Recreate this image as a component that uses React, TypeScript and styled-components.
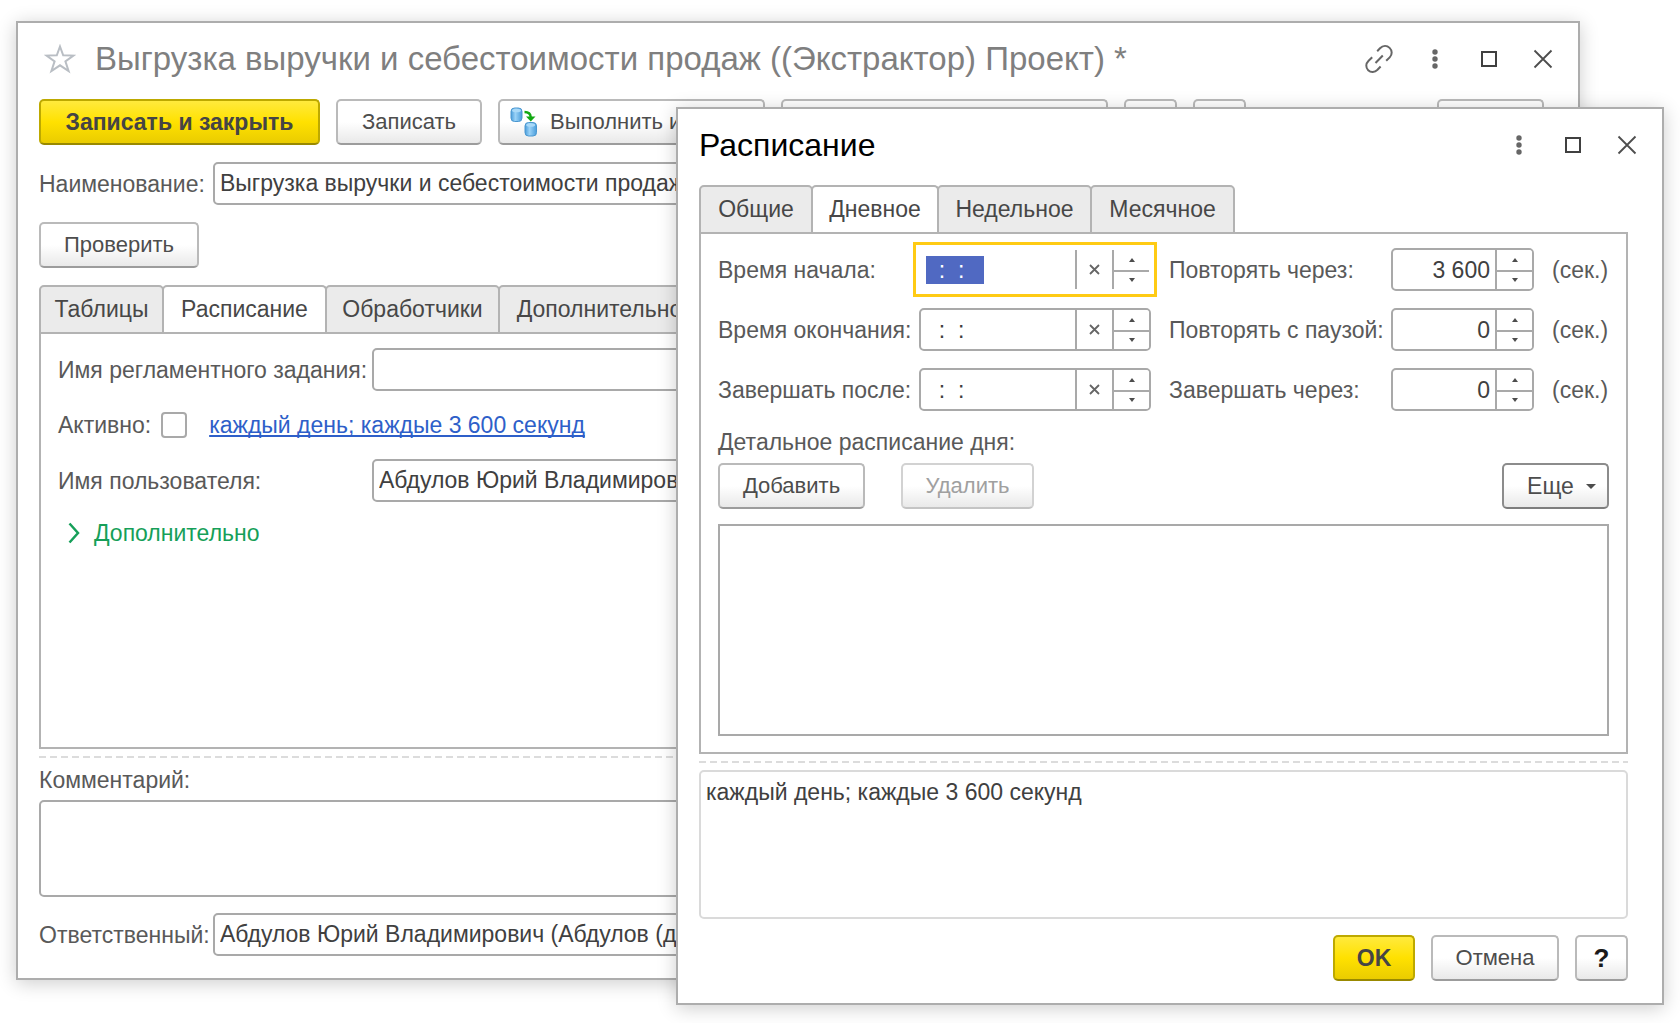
import React, { useEffect, useRef } from "react";
import styled, { createGlobalStyle, css } from "styled-components";

const line = "#b3b3b3";
const fieldLine = "#a9a9a9";

const GlobalStyle = createGlobalStyle`
  *, *::before, *::after { box-sizing: border-box; }
  body {
    margin: 0;
    background: #fff;
    color: #595959;
    font-family: "Liberation Sans", Arial, sans-serif;
    font-size: 23px;
    line-height: 28px;
  }
  button, input, textarea { font: inherit; }
`;

const Desktop = styled.main`
  position: relative;
  min-height: 100vh;
  overflow: hidden;
`;

const Window = styled.section<{ $top: number; $left: number; $right: number }>`
  position: absolute;
  top: ${(p) => p.$top}px;
  left: ${(p) => p.$left}px;
  right: ${(p) => p.$right}px;
  background: #fff;
  border: 2px solid #adadad;
  box-shadow: 0 3px 18px rgba(0, 0, 0, 0.2);
`;

const Header = styled.header`
  display: flex;
  align-items: center;
  height: 72px;
  margin-bottom: 4px;
  padding: 0 8px 0 21px;
`;

const Title = styled.h1<{ $muted?: boolean }>`
  flex: 1;
  min-width: 0;
  margin: 0;
  font-size: ${(p) => (p.$muted ? 33 : 32)}px;
  line-height: 40px;
  font-weight: 400;
  white-space: nowrap;
  color: ${(p) => (p.$muted ? "#7f7f7f" : "#000")};
`;

const IconButton = styled.button<{ $width?: number }>`
  display: flex;
  align-items: center;
  justify-content: center;
  width: ${(p) => p.$width ?? 54}px;
  height: 40px;
  padding: 0;
  border: 0;
  background: none;
`;

const StarButton = styled(IconButton)`
  margin: 0 17px 0 3px;
`;

const Body = styled.div`
  display: flex;
  flex-direction: column;
  padding: 0 34px 22px 21px;
`;

const Toolbar = styled.div<{ $end?: boolean; $space?: number }>`
  display: flex;
  gap: 16px;
  justify-content: ${(p) => (p.$end ? "flex-end" : "flex-start")};
  margin-top: ${(p) => p.$space ?? 0}px;
`;

const Spacer = styled.span`
  flex: 1;
`;

const Button = styled.button<{ $primary?: boolean; $strong?: boolean; $width: number }>`
  display: flex;
  align-items: center;
  justify-content: center;
  gap: 12px;
  width: ${(p) => p.$width}px;
  height: 46px;
  padding: 0;
  overflow: hidden;
  white-space: nowrap;
  font-size: 22px;
  color: #4d4d4d;
  border: 2px solid ${(p) => (p.$strong ? "#8c8c8c" : "#bababa")};
  border-bottom-color: ${(p) => (p.$strong ? "#7d7d7d" : "#9c9c9c")};
  border-radius: 5px;
  background: linear-gradient(#fff 0%, #fff 50%, #e9e9e9 100%);

  &:disabled {
    color: #a0a0a0;
    border-color: #d2d2d2;
    border-bottom-color: #c4c4c4;
  }

  ${(p) =>
    p.$primary &&
    css`
      font-size: 23px;
      font-weight: 700;
      color: #454545;
      border-color: #bda900;
      border-bottom-color: #998900;
      background: linear-gradient(#ffea3d 0%, #ffe100 50%, #eacc00 100%);
    `}
`;

const IconTextButton = styled(Button)`
  justify-content: flex-start;
  padding-left: 10px;
`;

const HelpButton = styled(Button)`
  font-weight: 700;
  font-size: 26px;
  color: #1a1a1a;
`;

const DeleteButton = styled(Button)`
  margin-left: 20px;
`;

const MoreButton = styled(Button)`
  padding-left: 12px;
  font-size: 23px;
`;

const FormRow = styled.div<{ $label: number; $space?: number }>`
  display: grid;
  grid-template-columns: ${(p) => p.$label}px minmax(0, 1fr);
  align-items: center;
  margin-top: ${(p) => p.$space ?? 0}px;
`;

const Label = styled.label`
  white-space: nowrap;
`;

const fieldBox = css`
  border: 2px solid ${fieldLine};
  border-radius: 5px;
  background: #fff;
  color: #404040;
`;

const TextInput = styled.input`
  ${fieldBox}
  width: 100%;
  height: 43px;
  padding: 0 5px;
  outline: 0;
`;

const TextArea = styled.textarea<{ $height: number; $soft?: boolean }>`
  ${fieldBox}
  display: block;
  width: 100%;
  height: ${(p) => p.$height}px;
  padding: 6px 5px;
  resize: none;
  outline: 0;
  ${(p) => p.$soft && "border-color: #dadada;"}
`;

const TabSheet = styled.div<{ $space?: number }>`
  display: grid;
  margin-top: ${(p) => p.$space ?? 0}px;
`;

const Tabs = styled.div`
  display: flex;
  height: 49px;
  margin-bottom: -2px;
`;

const Tab = styled.button<{ $active?: boolean; $width: number }>`
  width: ${(p) => p.$width}px;
  padding: 0 0 2px;
  border: 2px solid ${line};
  border-bottom-color: ${(p) => (p.$active ? "#fff" : line)};
  border-radius: 5px 5px 0 0;
  background: ${(p) => (p.$active ? "#fff" : "#ebebeb")};
  color: #474747;
  white-space: nowrap;

  & + & {
    margin-left: -2px;
  }
`;

const Panel = styled.div<{ $minHeight?: number }>`
  display: flex;
  flex-direction: column;
  gap: 17px;
  min-height: ${(p) => p.$minHeight ?? 0}px;
  padding: 14px 17px 16px;
  border: 2px solid ${line};
`;

const Splitter = styled.div`
  height: 2px;
  margin: 7px 0;
  background: repeating-linear-gradient(90deg, #dcdcdc 0 7px, transparent 7px 11px);
`;

const ActiveRow = styled.div`
  display: flex;
  align-items: center;
  height: 34px;
`;

const CheckBox = styled.input`
  appearance: none;
  width: 26px;
  height: 26px;
  margin: 0 22px 0 10px;
  border: 2px solid ${fieldLine};
  border-radius: 4px;
  background: #fff;
`;

const ScheduleLink = styled.a`
  color: #2e5fc9;
  text-decoration: underline;
  text-decoration-thickness: 2px;
  text-underline-offset: 2px;
  text-decoration-skip-ink: none;
  white-space: nowrap;
`;

const Expander = styled.button`
  display: flex;
  align-items: center;
  align-self: flex-start;
  gap: 14px;
  height: 28px;
  padding: 0 0 0 10px;
  border: 0;
  background: none;
  color: #169f59;
`;

const CommentLabel = styled(Label)`
  line-height: 30px;
  margin-bottom: 5px;
`;

const ScheduleGrid = styled.div`
  display: grid;
  grid-template-columns: 201px minmax(0, 1fr) 240px 143px 75px;
  row-gap: 17px;
  align-items: center;
`;

const OffsetLabel = styled(Label)`
  padding-left: 18px;
`;

const Composite = styled.div<{ $focused?: boolean }>`
  ${fieldBox}
  display: flex;
  height: 43px;
  overflow: hidden;
  ${(p) =>
    p.$focused &&
    css`
      border-color: #fff;
      border-radius: 0;
      outline: 3px solid #ffcb14;
      outline-offset: 3px;
    `}
`;

const BareInput = styled.input<{ $number?: boolean }>`
  flex: 1;
  min-width: 0;
  padding: 0 5px;
  border: 0;
  outline: 0;
  background: none;
  color: #404040;
  caret-color: transparent;
  text-align: ${(p) => (p.$number ? "right" : "left")};

  &::selection {
    background: #5069c2;
    color: #fff;
  }
`;

const FieldButton = styled.button`
  display: flex;
  align-items: center;
  justify-content: center;
  width: 37px;
  padding: 0;
  border: 0;
  border-left: 2px solid ${fieldLine};
  background: #fff;
`;

const Spinner = styled.div`
  display: grid;
  grid-template-rows: 1fr 1fr;
  width: 37px;
  border-left: 2px solid ${fieldLine};
`;

const SpinButton = styled.button`
  display: flex;
  align-items: center;
  justify-content: center;
  padding: 0;
  border: 0;
  background: #fff;

  & + & {
    border-top: 2px solid ${fieldLine};
  }
`;

const Detail = styled.div`
  display: grid;
`;

const DetailLabel = styled.div`
  line-height: 28px;
`;

const DetailList = styled.div`
  height: 212px;
  margin-top: 15px;
  border: 2px solid ${fieldLine};
`;

const StarIcon = () => (
  <svg width="32" height="30" viewBox="0 0 32 30" fill="none" stroke="#b9bec4" strokeWidth="2">
    <path d="M16 2.500 19.200 11.300 29.500 11.600 21.400 17.400 24.600 27 16 21.300 7.400 27 10.600 17.400 2.500 11.600 12.800 11.300Z" />
  </svg>
);

const LinkIcon = () => (
  <svg width="30" height="30" viewBox="0 0 30 30" fill="none" stroke="#666" strokeWidth="2">
    <path d="M13.200 7.200 16 4.300C19 1.300 23 1.300 25.600 3.900S28.500 10.600 25.700 13.400L22.200 16.800" />
    <path d="M8.200 13.200 4.600 16.800C1.600 19.800 1.600 23.600 4.200 26.200S10.700 28.600 13.500 25.800L16.600 22.500" />
    <path d="M11.500 19 18.800 11.500" />
  </svg>
);

const DotsIcon = () => (
  <svg width="8" height="22" viewBox="0 0 8 22" fill="#666">
    <circle cx="4" cy="4" r="2.700" />
    <circle cx="4" cy="11" r="2.700" />
    <circle cx="4" cy="18" r="2.700" />
  </svg>
);

const SquareIcon = () => (
  <svg width="18" height="18" viewBox="0 0 18 18" fill="none" stroke="#404040" strokeWidth="2">
    <rect x="2" y="2" width="14" height="14" />
  </svg>
);

const CloseIcon = () => (
  <svg width="20" height="20" viewBox="0 0 20 20" fill="none" stroke="#4d4d4d" strokeWidth="1.8">
    <path d="M1.500 1.500 18.500 18.500M18.500 1.500 1.500 18.500" />
  </svg>
);

const TransferIcon = () => (
  <svg width="28" height="30" viewBox="0 0 28 30">
    <defs>
      <linearGradient id="cylinder" x1="0" x2="1" y1="0" y2="0">
        <stop offset="0" stopColor="#4a9ddb" />
        <stop offset="0.4" stopColor="#9ad2f7" />
        <stop offset="1" stopColor="#4a9ddb" />
      </linearGradient>
    </defs>
    <rect x="1" y="1" width="11" height="13.500" rx="3.500" fill="url(#cylinder)" stroke="#4a97d0" />
    <ellipse cx="6.500" cy="3.500" rx="4.500" ry="1.800" fill="#a9d9f8" />
    <rect x="15" y="15.500" width="11.500" height="13.500" rx="3.500" fill="url(#cylinder)" stroke="#4a97d0" />
    <ellipse cx="20.700" cy="18" rx="4.500" ry="1.800" fill="#a9d9f8" />
    <path d="M14.500 5c4 0 6 1.500 6.200 5" fill="none" stroke="#12a812" strokeWidth="2.400" />
    <path d="M16 9.500h9.500l-4.700 5Z" fill="#12a812" />
  </svg>
);

const ChevronIcon = () => (
  <svg width="12" height="22" viewBox="0 0 12 22" fill="none" stroke="#169f59" strokeWidth="2.500">
    <path d="M1.500 1.500 10 11 1.500 20.500" />
  </svg>
);

const ClearIcon = () => (
  <svg width="11" height="11" viewBox="0 0 11 11" fill="none" stroke="#666" strokeWidth="1.800">
    <path d="M1 1 10 10M10 1 1 10" />
  </svg>
);

const Arrow = ({ down, wide }: { down?: boolean; wide?: boolean }) => (
  <svg width={wide ? 10 : 6} height={wide ? 5 : 4} viewBox="0 0 6 4" preserveAspectRatio="none" fill="#4d4d4d">
    <path d={down ? "M0 0h6L3 4Z" : "M0 4h6L3 0Z"} />
  </svg>
);

const SpinButtons = () => (
  <Spinner>
    <SpinButton type="button" aria-label="Увеличить"><Arrow /></SpinButton>
    <SpinButton type="button" aria-label="Уменьшить"><Arrow down /></SpinButton>
  </Spinner>
);

const TimeField = ({ id, focused }: { id: string; focused?: boolean }) => {
  const input = useRef<HTMLInputElement>(null);
  useEffect(() => {
    if (focused && input.current) {
      input.current.focus();
      input.current.select();
    }
  }, [focused]);
  return (
    <Composite $focused={focused}>
      <BareInput id={id} ref={input} defaultValue="  :  :   " />
      <FieldButton type="button" aria-label="Очистить"><ClearIcon /></FieldButton>
      <SpinButtons />
    </Composite>
  );
};

const NumberField = ({ id, value }: { id: string; value: string }) => (
  <Composite>
    <BareInput $number id={id} defaultValue={value} />
    <SpinButtons />
  </Composite>
);

const WindowControls = () => (
  <>
    <IconButton type="button" aria-label="Меню"><DotsIcon /></IconButton>
    <IconButton type="button" aria-label="Развернуть"><SquareIcon /></IconButton>
    <IconButton type="button" aria-label="Закрыть"><CloseIcon /></IconButton>
  </>
);

type TabItem = { title: string; width: number };

const TabStrip = ({ items, active }: { items: TabItem[]; active: string }) => (
  <Tabs role="tablist">
    {items.map(({ title, width }) => (
      <Tab
        key={title}
        type="button"
        role="tab"
        aria-selected={title === active}
        $active={title === active}
        $width={width}
      >
        {title}
      </Tab>
    ))}
  </Tabs>
);

const exportTabs = [
  { title: "Таблицы", width: 125 },
  { title: "Расписание", width: 165 },
  { title: "Обработчики", width: 175 },
  { title: "Дополнительно", width: 203 },
];

const scheduleTabs = [
  { title: "Общие", width: 114 },
  { title: "Дневное", width: 128 },
  { title: "Недельное", width: 155 },
  { title: "Месячное", width: 145 },
];

const scheduleRows = [
  { id: "start", time: "Время начала:", number: "Повторять через:", value: "3 600" },
  { id: "end", time: "Время окончания:", number: "Повторять с паузой:", value: "0" },
  { id: "finish", time: "Завершать после:", number: "Завершать через:", value: "0" },
];

const ExportWindow = () => (
  <Window $top={21} $left={16} $right={100}>
    <Header>
      <StarButton type="button" aria-label="Избранное" $width={36}><StarIcon /></StarButton>
      <Title $muted>Выгрузка выручки и себестоимости продаж ((Экстрактор) Проект) *</Title>
      <IconButton type="button" aria-label="Ссылка" $width={58}><LinkIcon /></IconButton>
      <WindowControls />
    </Header>
    <Body>
      <Toolbar>
        <Button type="button" $primary $width={281}>Записать и закрыть</Button>
        <Button type="button" $width={146}>Записать</Button>
        <IconTextButton type="button" $width={267}><TransferIcon />Выполнить и</IconTextButton>
        <Button type="button" aria-label="Настройки" $width={327} />
        <Button type="button" aria-label="Назад" $width={53} />
        <Button type="button" aria-label="Вперед" $width={53} />
        <Spacer />
        <Button type="button" aria-label="Команды" $width={107} />
      </Toolbar>
      <FormRow $label={174} $space={17}>
        <Label htmlFor="name">Наименование:</Label>
        <TextInput id="name" defaultValue="Выгрузка выручки и себестоимости продаж ((Экстрактор) Проект)" />
      </FormRow>
      <Toolbar $space={17}>
        <Button type="button" $width={160}>Проверить</Button>
      </Toolbar>
      <TabSheet $space={17}>
        <TabStrip items={exportTabs} active="Расписание" />
        <Panel $minHeight={417}>
          <FormRow $label={314}>
            <Label htmlFor="job">Имя регламентного задания:</Label>
            <TextInput id="job" />
          </FormRow>
          <ActiveRow>
            <Label htmlFor="active">Активно:</Label>
            <CheckBox id="active" type="checkbox" />
            <ScheduleLink href="#schedule">каждый день; каждые 3 600 секунд</ScheduleLink>
          </ActiveRow>
          <FormRow $label={314}>
            <Label htmlFor="user">Имя пользователя:</Label>
            <TextInput id="user" defaultValue="Абдулов Юрий Владимирович" />
          </FormRow>
          <Expander type="button"><ChevronIcon />Дополнительно</Expander>
        </Panel>
      </TabSheet>
      <Splitter />
      <CommentLabel htmlFor="comment">Комментарий:</CommentLabel>
      <TextArea id="comment" $height={97} />
      <FormRow $label={174} $space={16}>
        <Label htmlFor="owner">Ответственный:</Label>
        <TextInput id="owner" defaultValue="Абдулов Юрий Владимирович (Абдулов (директор))" />
      </FormRow>
    </Body>
  </Window>
);

const ScheduleWindow = () => (
  <Window $top={107} $left={676} $right={16} id="schedule">
    <Header>
      <Title as="h2">Расписание</Title>
      <WindowControls />
    </Header>
    <Body>
      <TabSheet>
        <TabStrip items={scheduleTabs} active="Дневное" />
        <Panel>
          <ScheduleGrid>
            {scheduleRows.map((row, index) => (
              <React.Fragment key={row.id}>
                <Label htmlFor={row.id}>{row.time}</Label>
                <TimeField id={row.id} focused={index === 0} />
                <OffsetLabel htmlFor={`${row.id}-seconds`}>{row.number}</OffsetLabel>
                <NumberField id={`${row.id}-seconds`} value={row.value} />
                <OffsetLabel as="span">(сек.)</OffsetLabel>
              </React.Fragment>
            ))}
          </ScheduleGrid>
          <Detail>
            <DetailLabel>Детальное расписание дня:</DetailLabel>
            <Toolbar $space={7}>
              <Button type="button" $width={147}>Добавить</Button>
              <DeleteButton type="button" disabled $width={133}>Удалить</DeleteButton>
              <Spacer />
              <MoreButton type="button" $strong $width={107}>Еще <Arrow down wide /></MoreButton>
            </Toolbar>
            <DetailList role="listbox" aria-label="Детальное расписание дня" />
          </Detail>
        </Panel>
      </TabSheet>
      <Splitter />
      <TextArea $soft $height={149} readOnly aria-label="Описание расписания" defaultValue="каждый день; каждые 3 600 секунд" />
      <Toolbar $end $space={16}>
        <Button type="button" $primary $width={82}>OK</Button>
        <Button type="button" $width={128}>Отмена</Button>
        <HelpButton type="button" $width={53}>?</HelpButton>
      </Toolbar>
    </Body>
  </Window>
);

export default function App() {
  return (
    <Desktop>
      <GlobalStyle />
      <ExportWindow />
      <ScheduleWindow />
    </Desktop>
  );
}
